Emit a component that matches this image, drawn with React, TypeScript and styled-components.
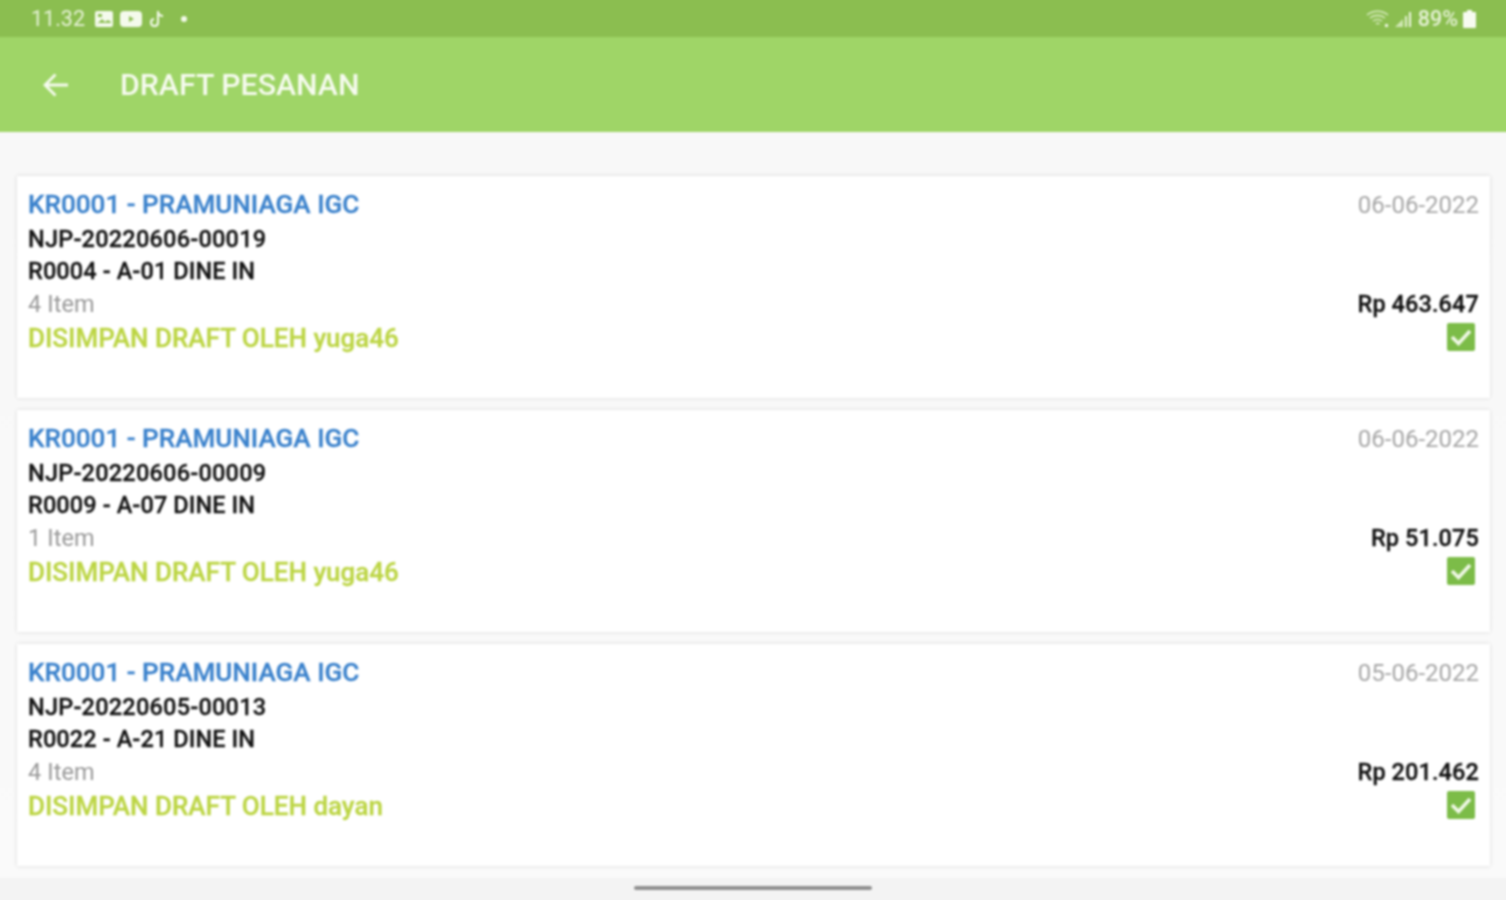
import React from "react";
import styled, { createGlobalStyle } from "styled-components";

const GlobalStyle = createGlobalStyle`
  html, body {
    margin: 0;
    padding: 0;
    background: #fafafa;
    font-family: Roboto, "Liberation Sans", sans-serif;
  }
`;

interface Draft {
  cashier: string;
  orderNo: string;
  table: string;
  items: string;
  savedBy: string;
  date: string;
  total: string;
}

const DRAFTS: Draft[] = [
  {
    cashier: "KR0001 - PRAMUNIAGA IGC",
    orderNo: "NJP-20220606-00019",
    table: "R0004 - A-01 DINE IN",
    items: "4 Item",
    savedBy: "DISIMPAN DRAFT OLEH yuga46",
    date: "06-06-2022",
    total: "Rp 463.647",
  },
  {
    cashier: "KR0001 - PRAMUNIAGA IGC",
    orderNo: "NJP-20220606-00009",
    table: "R0009 - A-07 DINE IN",
    items: "1 Item",
    savedBy: "DISIMPAN DRAFT OLEH yuga46",
    date: "06-06-2022",
    total: "Rp 51.075",
  },
  {
    cashier: "KR0001 - PRAMUNIAGA IGC",
    orderNo: "NJP-20220605-00013",
    table: "R0022 - A-21 DINE IN",
    items: "4 Item",
    savedBy: "DISIMPAN DRAFT OLEH dayan",
    date: "05-06-2022",
    total: "Rp 201.462",
  },
];

/* The reference is a soft, upscaled capture. Screen is 4px larger on each side
   so the blur does not fade out at the window edge. */
const BLEED = 4;

const Viewport = styled.div`
  width: 1506px;
  height: 900px;
  overflow: hidden;
`;

const Screen = styled.div`
  width: ${1506 + BLEED * 2}px;
  height: ${900 + BLEED * 2}px;
  margin: -${BLEED}px;
  display: flex;
  flex-direction: column;
  background: #fafafa;
  filter: blur(0.8px);
`;

/* ── Status bar ── */

const StatusBar = styled.div`
  height: 37px;
  flex: none;
  display: flex;
  align-items: center;
  justify-content: space-between;
  padding: ${BLEED}px ${30 + BLEED}px 0 ${31 + BLEED}px;
  background: #8bbe50;
  color: #e6f2d6;
`;

const StatusGroup = styled.div`
  display: flex;
  align-items: center;
  gap: 7px;
`;

const StatusRightGroup = styled(StatusGroup)`
  gap: 5px;
`;

const Time = styled.span`
  font-size: 21.5px;
  margin-right: 3px;
`;

const Battery = styled.span`
  font-size: 21.5px;
  font-weight: 500;
  margin-left: 2px;
`;

const Dot = styled.span`
  width: 6px;
  height: 6px;
  margin-left: 9px;
  border-radius: 50%;
  background: #f4faec;
`;

/* ── App bar ── */

const AppBar = styled.header`
  height: 95px;
  flex: none;
  display: flex;
  align-items: center;
  gap: 51px;
  padding: 0 0 0 ${43 + BLEED}px;
  background: #9fd567;
`;

const Title = styled.h1`
  margin: 0;
  color: #f6fbef;
  font-size: 30.3px;
  font-weight: 500;
`;

/* ── List ── */

const List = styled.main`
  flex: 1;
  display: flex;
  flex-direction: column;
  gap: 12px;
  padding: 44px ${16 + BLEED}px 0 ${17 + BLEED}px;
  background: linear-gradient(#f8f8f8, #fafafa);
`;

const Card = styled.article`
  height: 222px;
  flex: none;
  box-sizing: border-box;
  display: flex;
  justify-content: space-between;
  padding: 13px 11px 0 11px;
  background: #fff;
  box-shadow: 0 0 4px rgba(0, 0, 0, 0.14);
`;

const Column = styled.div`
  display: flex;
  flex-direction: column;
`;

const RightColumn = styled(Column)`
  align-items: flex-end;
`;

const Cashier = styled.div`
  height: 34px;
  line-height: 30px;
  color: #3b82cc;
  font-size: 26.1px;
  font-weight: 500;
  -webkit-text-stroke: 0.3px #3b82cc;
`;

const Line = styled.div`
  height: 32.8px;
  line-height: 32px;
  color: #141414;
  font-size: 23.5px;
  font-weight: 500;
  letter-spacing: 0.1px;
  -webkit-text-stroke: 0.3px #141414;
`;

const OrderNo = styled(Line)`
  height: 32.4px;
  letter-spacing: 0.22px;
`;

const Items = styled(Line)`
  color: #999;
  font-weight: 400;
  -webkit-text-stroke: 0;
`;

const SavedBy = styled.div`
  height: 34px;
  line-height: 34px;
  color: #bcd544;
  font-size: 26px;
  font-weight: 500;
  -webkit-text-stroke: 0.3px #bcd544;
`;

const DateText = styled.div`
  height: 99.4px;
  line-height: 32px;
  color: #a6a6a6;
  font-size: 24px;
`;

const Total = styled(Line)`
  color: #111;
`;

const CheckBox = styled.span`
  width: 28px;
  height: 28px;
  margin: 1.800px 4px 0 0;
  display: flex;
  align-items: center;
  justify-content: center;
  border-radius: 2px;
  background: #7cbc48;
`;

/* ── Nav bar ── */

const NavBar = styled.footer`
  height: ${22 + BLEED}px;
  flex: none;
  display: flex;
  justify-content: center;
  padding-top: 8px;
  box-sizing: border-box;
  background: #f3f3f3;
`;

const NavHandle = styled.span`
  width: 238px;
  height: 4px;
  border-radius: 2px;
  background: #8f8f8f;
`;

const BackIcon = () => (
  <svg width="26" height="26" viewBox="0 0 26 26" fill="none" stroke="#f6fbef" strokeWidth="2.8">
    <path d="M25 13H2M12.500 2.500 2 13l10.500 10.500" />
  </svg>
);

const GalleryIcon = () => (
  <svg width="18" height="16" viewBox="0 0 18 16">
    <rect width="18" height="16" rx="2" fill="#f4faec" />
    <rect x="3" y="3" width="4" height="3" fill="#8bbe50" />
    <path d="M2 13l5-5 3 3 3-2 3 2v1H2z" fill="#8bbe50" />
  </svg>
);

const VideoIcon = () => (
  <svg width="22" height="16" viewBox="0 0 22 16">
    <rect width="22" height="16" rx="4" fill="#f4faec" />
    <path d="M9 5l5 3-5 3z" fill="#8bbe50" />
  </svg>
);

const TiktokIcon = () => (
  <svg width="16" height="18" viewBox="0 0 16 18" fill="none" stroke="#f4faec" strokeWidth="2">
    <path d="M9 1v11.500a3.500 3.500 0 1 1-4-3.400M9 2c.5 2.500 2.500 4 5 4" />
  </svg>
);

const WifiIcon = () => (
  <svg width="24" height="18" viewBox="0 0 24 18" fill="none" stroke="#d9ecc1" strokeWidth="1.6">
    <path d="M1 5c6-5 15-5 21 0M4 8c4-3.500 11-3.500 15 0M7 11c2.500-2 6.500-2 9 0M10 14c1-.8 2.500-.8 3.500 0" />
    <path d="M19 14h3v3h-3z" fill="#eef7e2" stroke="none" />
  </svg>
);

const SignalIcon = () => (
  <svg width="16" height="16" viewBox="0 0 16 16">
    <path d="M0 16 8 8v8z" fill="#cfe6b2" />
    <path d="M10 5h2v11h-2z" fill="#e5f2d4" />
    <path d="M14 1h2v15h-2z" fill="#eef7e2" />
  </svg>
);

const BatteryIcon = () => (
  <svg width="13" height="18" viewBox="0 0 13 18">
    <path d="M4 0h5v2h3a1 1 0 0 1 1 1v14a1 1 0 0 1-1 1H1a1 1 0 0 1-1-1V3a1 1 0 0 1 1-1h3z" fill="#f7fbf0" />
  </svg>
);

const CheckIcon = () => (
  <svg width="22" height="18" viewBox="0 0 22 18" fill="none" stroke="#f0f8e6" strokeWidth="3.6">
    <path d="M2 9l6.500 6.500L20 3" />
  </svg>
);

const DraftCard: React.FC<{ draft: Draft }> = ({ draft }) => (
  <Card>
    <Column>
      <Cashier>{draft.cashier}</Cashier>
      <OrderNo>{draft.orderNo}</OrderNo>
      <Line>{draft.table}</Line>
      <Items>{draft.items}</Items>
      <SavedBy>{draft.savedBy}</SavedBy>
    </Column>
    <RightColumn>
      <DateText>{draft.date}</DateText>
      <Total>{draft.total}</Total>
      <CheckBox>
        <CheckIcon />
      </CheckBox>
    </RightColumn>
  </Card>
);

export default function App() {
  return (
    <>
      <GlobalStyle />
      <Viewport>
        <Screen>
          <StatusBar>
            <StatusGroup>
              <Time>11.32</Time>
              <GalleryIcon />
              <VideoIcon />
              <TiktokIcon />
              <Dot />
            </StatusGroup>
            <StatusRightGroup>
              <WifiIcon />
              <SignalIcon />
              <Battery>89%</Battery>
              <BatteryIcon />
            </StatusRightGroup>
          </StatusBar>
          <AppBar>
            <BackIcon />
            <Title>DRAFT PESANAN</Title>
          </AppBar>
          <List>
            {DRAFTS.map((draft) => (
              <DraftCard key={draft.orderNo} draft={draft} />
            ))}
          </List>
          <NavBar>
            <NavHandle />
          </NavBar>
        </Screen>
      </Viewport>
    </>
  );
}
